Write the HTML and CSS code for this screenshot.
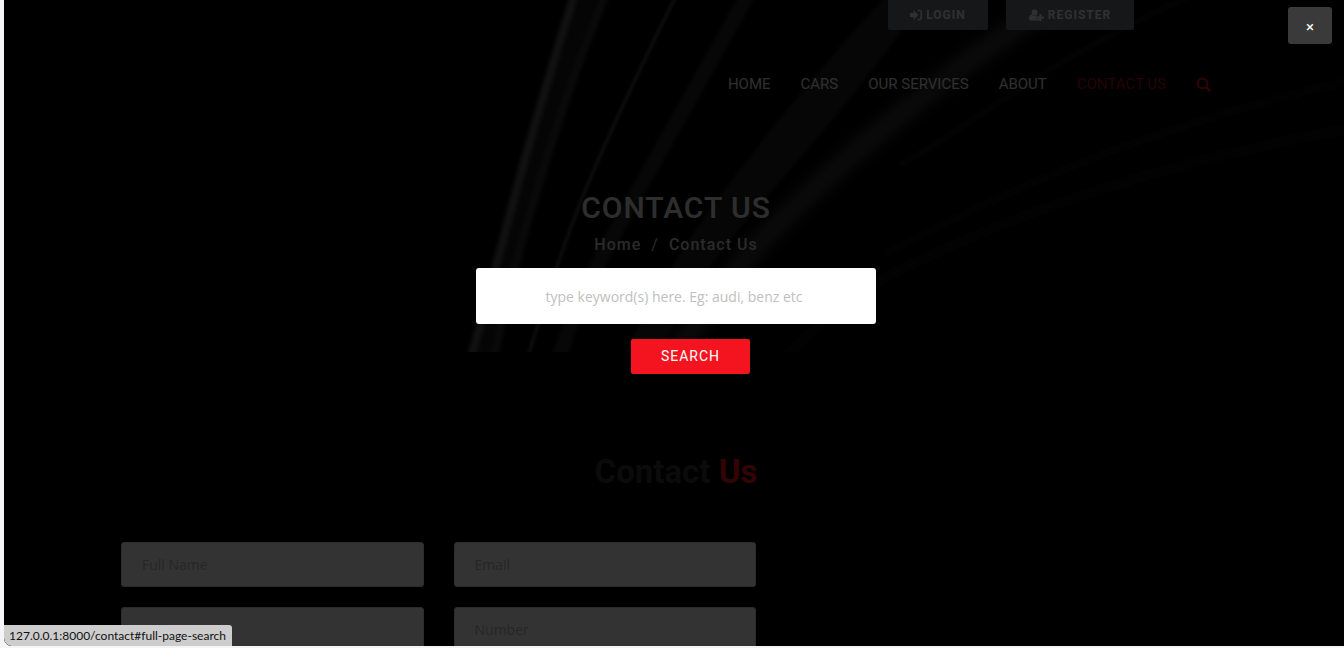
FILE: index.html
```html
<!DOCTYPE html>
<html lang="en">
<head>
<meta charset="utf-8">
<title>Contact Us</title>
<link rel="stylesheet" href="styles.css">
</head>
<body>
<div class="window">
  <div class="page">
    <div class="banner">
      <svg class="banner-art" viewBox="0 0 1344 352" preserveAspectRatio="xMidYMid slice" aria-hidden="true">
        <defs>
          <filter id="soft" x="-20%" y="-20%" width="140%" height="140%"><feGaussianBlur stdDeviation="2"/></filter>
          <filter id="softer" x="-20%" y="-20%" width="140%" height="140%"><feGaussianBlur stdDeviation="7"/></filter>
          <filter id="fine" x="-20%" y="-20%" width="140%" height="140%"><feGaussianBlur stdDeviation="1"/></filter>
        </defs>
        <g fill="none" filter="url(#soft)">
          <path d="M568-4C548 60 528 125 496 250L466 360L492 360L519 250C545 140 570 70 604-4Z" fill="#1c1c1c"/>
          <path d="M570-6C550 60 528 125 496 250Q480 310 466 360" stroke="#5c5c5c" stroke-width="7"/>
          <path d="M602-6C575 60 550 130 516 250Q500 310 490 360" stroke="#343434" stroke-width="7"/>
          <path d="M744-6C700 75 650 160 596 260Q570 310 554 360" stroke="#262626" stroke-width="15"/>
          <path d="M884-6C830 50 740 160 690 232Q650 290 618 360L650 360Q690 285 738 225C790 165 850 100 924-6Z" fill="#202020"/>
        </g>
        <path d="M672-4Q625 90 592 165T523 360" fill="none" stroke="#383838" stroke-width="4" filter="url(#fine)"/>
        <path d="M1060-4C960 60 870 130 780 218Q720 275 666 365" fill="none" stroke="#363636" stroke-width="22" filter="url(#softer)"/>
        <path d="M1190-6Q1080 45 1006 95T896 165" fill="none" stroke="#1a1a1a" stroke-width="4" filter="url(#soft)"/>
        <g fill="none" stroke="#070707" filter="url(#soft)">
          <path d="M1350 80Q1100 135 880 255" stroke-width="9"/>
          <path d="M1350 128Q1080 175 876 280Q830 306 780 360" stroke-width="11"/>
        </g>
      </svg>
      <header class="container header">
        <div class="account">
          <a class="account-link" href="#login">
            <svg class="icon" viewBox="0 0 12 12" aria-hidden="true"><path d="M0 4h3.500V1.200L8.500 6l-5 4.800V8H0z" fill="currentColor"/><path d="M7.500 1.600H9.800a1.400 1.400 0 0 1 1.400 1.400v6A1.400 1.400 0 0 1 9.800 10.400H7.500" fill="none" stroke="currentColor" stroke-width="1.500"/></svg>
            LOGIN</a>
          <a class="account-link account-link-wide" href="#register">
            <svg class="icon icon-wide" viewBox="0 0 15 12" aria-hidden="true"><path d="M5.500 0.500a3 3 0 1 1 0 6 3 3 0 0 1 0-6zM2.400 5.600Q5.500 8 8 6v1.500H7.500v2.200h2.700V11q-.5.600-1.300.6H1.800Q0 11.600 0 9.800 0 6 2.400 5.600zM10.400 5h2v2.500H15v2h-2.600V12h-2V9.500H8v-2h2.400z" fill="currentColor"/></svg>
            REGISTER</a>
        </div>
        <nav class="nav">
          <a href="#home">HOME</a>
          <a href="#cars">CARS</a>
          <a href="#services">OUR SERVICES</a>
          <a href="#about">ABOUT</a>
          <a class="active" href="#contact">CONTACT US</a>
          <a class="search-link" href="#full-page-search" aria-label="Search"><svg class="icon-search" viewBox="0 0 15 15" aria-hidden="true"><circle cx="6.500" cy="6.500" r="4.900" fill="none" stroke="currentColor" stroke-width="2.200"/><path d="M10.200 10.200l3.300 3.300" stroke="currentColor" stroke-width="2.600" stroke-linecap="round"/></svg></a>
        </nav>
      </header>
      <div class="intro">
        <h1>CONTACT US</h1>
        <div class="crumbs"><a href="#home">Home</a><span class="slash">/</span><span>Contact Us</span></div>
      </div>
    </div>
    <main class="container contact">
      <h2>Contact <span>Us</span></h2>
      <div class="grid">
        <form class="fields">
          <input type="text" placeholder="Full Name" aria-label="Full Name">
          <input type="email" placeholder="Email" aria-label="Email">
          <input type="text" placeholder="Subject" aria-label="Subject">
          <input type="text" placeholder="Number" aria-label="Number">
        </form>
      </div>
    </main>
  </div>
  <div class="overlay">
    <button class="close" type="button" aria-label="Close">×</button>
    <form class="search">
      <input type="text" placeholder="type keyword(s) here. Eg: audi, benz etc" aria-label="Keywords">
      <button type="submit">SEARCH</button>
    </form>
  </div>
  <div class="status">127.0.0.1:8000/contact#full-page-search</div>
</div>
</body>
</html>
```
FILE: styles.css
```css
* { box-sizing: border-box; }
body {
  margin: 0;
  height: 100vh;
  padding: 0 0 2px 4px;
  overflow: hidden;
  background: #f5f5f7;
  font-family: Roboto, sans-serif;
}
a { color: inherit; text-decoration: none; }
input, button { font: inherit; border: 0; }
.window {
  position: relative;
  height: 100%;
  margin-right: -4px;
  overflow: hidden;
  border-bottom-left-radius: 8px;
  background: #000;
}
.container { width: 100%; max-width: 1110px; margin: 0 auto; }
.banner { position: relative; height: 352px; color: #e6e6e6; }
.banner-art { position: absolute; inset: 0; width: 100%; height: 100%; }
.header { position: relative; }
.account {
  display: flex;
  justify-content: flex-end;
  gap: 18px;
  padding-right: 97px;
}
.account-link {
  display: flex;
  align-items: center;
  justify-content: center;
  gap: 4px;
  width: 100px;
  height: 30px;
  border-radius: 0 0 2px 2px;
  background: #6e737d;
  color: #f0f0f0;
  font-size: 12px;
  font-weight: 700;
  letter-spacing: 1px;
}
.account-link-wide { width: 128px; }
.icon { width: 12px; height: 12px; }
.icon-wide { width: 15px; }
.nav {
  display: flex;
  justify-content: flex-end;
  align-items: center;
  gap: 30px;
  height: 20px;
  margin-top: 44px;
  padding-right: 20px;
  font-size: 15px;
  font-weight: 400;
}
.nav .active { color: #b80f18; }
.search-link { display: flex; color: #e0121c; }
.icon-search { width: 15px; height: 15px; }
.intro { position: relative; margin-top: 94px; text-align: center; }
h1 {
  margin: 0;
  font-size: 30px;
  line-height: 40px;
  font-weight: 500;
  letter-spacing: 1px;
}
.crumbs {
  display: flex;
  justify-content: center;
  gap: 10px;
  margin-top: 5px;
  font-size: 16px;
  line-height: 24px;
  font-weight: 500;
  letter-spacing: 1px;
  color: #d2d2d2;
}
.slash { font-weight: 400; }
.contact { padding-top: 100px; }
h2 {
  margin: 0;
  text-align: center;
  font-size: 33px;
  line-height: 40px;
  font-weight: 700;
  color: #373737;
}
h2 span { color: #f4141f; }
.grid {
  display: grid;
  grid-template-columns: repeat(12, 1fr);
  gap: 30px;
  margin-top: 50px;
}
.fields {
  grid-column: span 7;
  display: grid;
  grid-template-columns: 1fr 1fr;
  gap: 20px 30px;
}
.fields input {
  min-width: 0;
  height: 45px;
  padding: 0 20px;
  border: 1px solid #dcdcdc;
  border-radius: 3px;
  background: #fff;
  font-family: "Open Sans", sans-serif;
  font-size: 14px;
}
.fields input::placeholder { color: #bebebe; opacity: 1; }
.overlay {
  position: absolute;
  inset: 0;
  background: rgba(0, 0, 0, 0.8);
}
.close {
  position: absolute;
  top: 7px;
  right: 16px;
  width: 44px;
  height: 37px;
  padding: 2px 0 0;
  border-radius: 3px;
  background: #3a3a3a;
  color: #fff;
  font-size: 15px;
}
.search {
  display: flex;
  flex-direction: column;
  align-items: center;
  gap: 15px;
  padding-top: 268px;
}
.search input {
  width: 400px;
  height: 56px;
  padding: 0 24px 0 20px;
  border-radius: 3px;
  background: #fff;
  text-align: center;
  font-family: "Open Sans", sans-serif;
  font-size: 14px;
}
.search input::placeholder { color: #c0c0c0; opacity: 1; }
.search button {
  width: 119px;
  height: 35px;
  margin-left: 29px;
  padding-bottom: 2px;
  border-radius: 2px;
  background: #f4141f;
  color: #fff;
  font-size: 14px;
  letter-spacing: 1px;
}
.status {
  position: absolute;
  left: 0;
  bottom: 0;
  height: 21px;
  padding: 0 6px 0 5px;
  border-top-right-radius: 3px;
  background: #cdcdcd;
  color: #111;
  font-family: Lato, sans-serif;
  font-size: 12px;
  line-height: 21px;
}
```
